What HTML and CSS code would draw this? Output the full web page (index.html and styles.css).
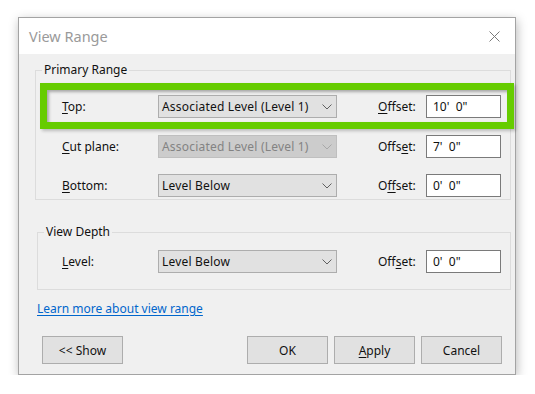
FILE: index.html
```html
<!DOCTYPE html>
<html>
<head>
<meta charset="utf-8">
<link rel="stylesheet" href="styles.css">
</head>
<body>
<div class="dialog">
  <div class="titlebar">
    <span class="title">View Range</span>
    <svg class="close" width="11" height="11" viewBox="0 0 11 11"><path d="M0.5 0.5 L10.5 10.5 M10.5 0.5 L0.5 10.5" stroke="#7a7a7a" stroke-width="1" fill="none"/></svg>
  </div>
  <div class="content">
    <fieldset class="group group-primary">
      <legend>Primary Range</legend>
      <div class="rows rows-primary">
        <div class="row row-top">
          <span class="label"><u>T</u>op:</span>
          <div class="combo"><span class="combo-text">Associated Level (Level 1)</span><svg class="chev" width="10" height="6" viewBox="0 0 10 6"><path d="M0.5 0.5 L5 5 L9.5 0.5" stroke="#606060" fill="none"/></svg></div>
          <span class="offset-label"><u>O</u>ffset:</span>
          <div class="input">10'  0"</div>
          <div class="highlight"></div>
        </div>
        <div class="row row-cut">
          <span class="label"><u>C</u>ut plane:</span>
          <div class="combo combo-disabled"><span class="combo-text">Associated Level (Level 1)</span><svg class="chev" width="10" height="6" viewBox="0 0 10 6"><path d="M0.5 0.5 L5 5 L9.5 0.5" stroke="#a8a8a8" fill="none"/></svg></div>
          <span class="offset-label">Offs<u>e</u>t:</span>
          <div class="input">7'  0"</div>
        </div>
        <div class="row row-bottom">
          <span class="label"><u>B</u>ottom:</span>
          <div class="combo"><span class="combo-text">Level Below</span><svg class="chev" width="10" height="6" viewBox="0 0 10 6"><path d="M0.5 0.5 L5 5 L9.5 0.5" stroke="#606060" fill="none"/></svg></div>
          <span class="offset-label">O<u>f</u>fset:</span>
          <div class="input">0'  0"</div>
        </div>
      </div>
    </fieldset>
    <fieldset class="group group-depth">
      <legend>View Depth</legend>
      <div class="rows rows-depth">
        <div class="row">
          <span class="label"><u>L</u>evel:</span>
          <div class="combo"><span class="combo-text">Level Below</span><svg class="chev" width="10" height="6" viewBox="0 0 10 6"><path d="M0.5 0.5 L5 5 L9.5 0.5" stroke="#606060" fill="none"/></svg></div>
          <span class="offset-label">Off<u>s</u>et:</span>
          <div class="input">0'  0"</div>
        </div>
      </div>
    </fieldset>
    <a class="link" href="#">Learn more about view range</a>
    <div class="buttons">
      <div class="btn">&lt;&lt; Show</div>
      <div class="spacer"></div>
      <div class="btn">OK</div>
      <div class="btn"><u>A</u>pply</div>
      <div class="btn">Cancel</div>
    </div>
  </div>
</div>
</body>
</html>
```

FILE: styles.css
```css
* { box-sizing: border-box; }
html, body {
  margin: 0;
  padding: 0;
  background: #ffffff;
}
body {
  font-family: "Noto Sans", "Open Sans", sans-serif;
  font-size: 12px;
  color: #111;
  padding-top: 17px;
  padding-left: 18px;
}
.dialog {
  width: 498px;
  height: 358px;
  border: 1px solid #a3a3a3;
  background: #f0f0f0;
  box-shadow: 1px 3px 10px rgba(0,0,0,0.28);
  display: flex;
  flex-direction: column;
}
.titlebar {
  height: 36px;
  background: #ffffff;
  display: flex;
  align-items: center;
  justify-content: space-between;
  padding-left: 10px;
  padding-right: 15px;
}
.title {
  font-size: 14.5px;
  color: #9a9a9a;
  line-height: 20px;
}
.close { display: block; }
.content {
  flex: 1;
  display: flex;
  flex-direction: column;
}
.group {
  margin: 0;
  padding: 0;
  border: 1px solid #dcdcdc;
  min-width: 0;
}
.group legend {
  line-height: 16px;
  padding: 0 2px;
  margin-left: 6px;
  color: #111;
}
.group-primary {
  margin: 8px 4px 0 16px;
}
.group-depth {
  margin: 24px 4px 0 18px;
}
.rows { display: flex; flex-direction: column; }
.rows-primary { padding: 17px 0 2px 26px; }
.rows-depth { padding: 10px 0 16px 24px; }
.row {
  display: flex;
  align-items: center;
  height: 23px;
  position: relative;
}
.row-cut { margin-top: 17px; }
.row-bottom { margin-top: 16px; }
.label { width: 96px; }
.combo {
  width: 179px;
  height: 23px;
  border: 1px solid #adadad;
  background: #e1e1e1;
  display: flex;
  align-items: center;
  justify-content: space-between;
  padding: 0 4px 0 3px;
}
.combo-text { letter-spacing: 0.2px; }
.combo-disabled {
  background: #cccccc;
  border-color: #bfbfbf;
  color: #838383;
}
.chev { display: block; }
.offset-label {
  margin-left: 41px;
  width: 48px;
}
.input {
  width: 75px;
  height: 23px;
  border: 1px solid #7a7a7a;
  background: #ffffff;
  padding-left: 6px;
  line-height: 21px;
  white-space: pre;
}
u { text-decoration: underline; text-underline-offset: 2px; }
.highlight {
  position: absolute;
  left: -22px;
  right: -4px;
  top: -12px;
  bottom: -11px;
  border: 7px solid #66cc00;
  box-shadow: inset 2px 2px 3px rgba(0,0,0,0.3), 2px 2px 3px rgba(0,0,0,0.22);
  pointer-events: none;
}
.link {
  margin: 11px 0 0 18px;
  align-self: flex-start;
  line-height: 16px;
  color: #0066cc;
  text-decoration: underline;
  text-underline-offset: 2px;
}
.buttons {
  display: flex;
  gap: 6px;
  margin-top: 19px;
  padding: 0 13px 0 23px;
}
.spacer { flex: 1; }
.btn {
  width: 81px;
  height: 28px;
  border: 1px solid #adadad;
  background: #e1e1e1;
  display: flex;
  align-items: center;
  justify-content: center;
  color: #111;
}
```
